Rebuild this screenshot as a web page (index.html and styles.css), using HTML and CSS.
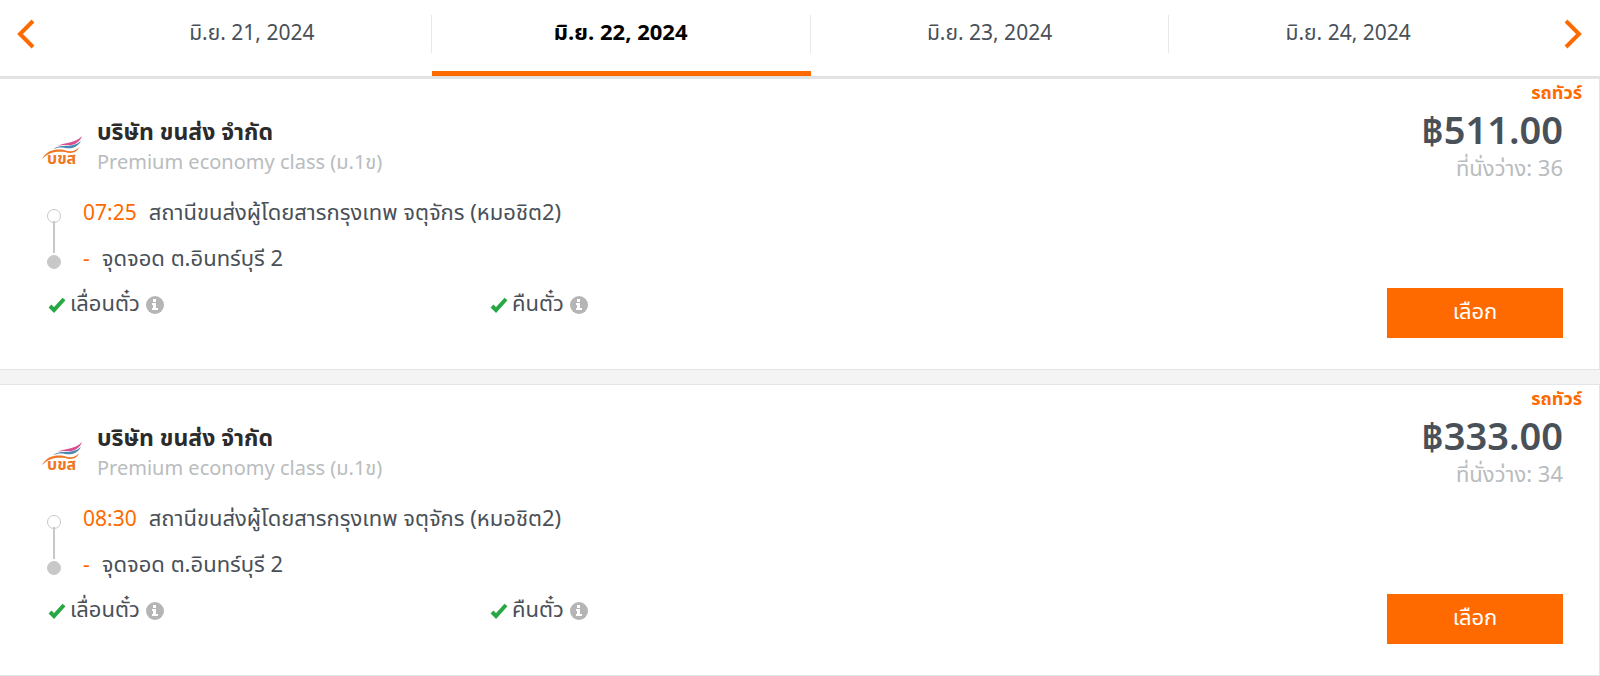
FILE: index.html
```html
<!doctype html>
<html lang="th">
<head>
    <meta charset="utf-8">
    <meta name="viewport" content="width=device-width, initial-scale=1.0">
    <title>บริษัท ขนส่ง จำกัด</title>
    <link rel="stylesheet" href="styles.css">
</head>
<body>
    <!-- shared icons -->
    <svg class="sprite" aria-hidden="true">
        <symbol id="logo" viewBox="0 0 42 30">
            <path d="M15 11C24 7 34 8 40 1C38 7 32 11 25 10C21 10 18 10 15 11Z" fill="#d94f91"/>
            <path d="M11 14C21 8 29 14 39 6C35 13 29 14 23 13C18 12 15 13 11 14Z" fill="#4c87b0"/>
            <path d="M0 24C6 14 15 14 22 15C28 17 33 17 37 12C35 18 29 19 23 17C15 16 7 17 0 24Z" fill="#ef7622"/>
        </symbol>
        <symbol id="check" viewBox="0 0 18 16">
            <path d="M2 9L6 13L16 2" fill="none" stroke="#28a745" stroke-width="4"/>
        </symbol>
        <symbol id="info" viewBox="0 0 18 18">
            <circle cx="9" cy="9" r="9" fill="#b5b5b5"/>
            <path d="M7 7H10V12H12V14H6V12H7V9H6V7ZM7 3H10V6H7Z" fill="#fff"/>
        </symbol>
    </svg>

    <nav class="dates">
        <button class="arrow" aria-label="ก่อนหน้า">
            <svg width="18" height="30" viewBox="0 0 18 30"><path d="M16 2L3 15L16 28" fill="none" stroke="#ff6a00" stroke-width="4"/></svg>
        </button>
        <a class="date" href="#"><span>มิ.ย. 21, 2024</span></a>
        <a class="date active" href="#"><span>มิ.ย. 22, 2024</span></a>
        <a class="date" href="#"><span>มิ.ย. 23, 2024</span></a>
        <a class="date" href="#"><span>มิ.ย. 24, 2024</span></a>
        <button class="arrow next" aria-label="ถัดไป">
            <svg width="18" height="30" viewBox="0 0 18 30"><path d="M2 2L15 15L2 28" fill="none" stroke="#ff6a00" stroke-width="4"/></svg>
        </button>
    </nav>

    <main>
        <article class="trip">
            <div class="detail">
                <div class="company">
                    <svg class="logo" viewBox="0 0 42 30"><use href="#logo"/><text x="5" y="29">บขส</text></svg>
                    <div>
                        <h2>บริษัท ขนส่ง จำกัด</h2>
                        <p class="muted">Premium economy class (ม.1ข)</p>
                    </div>
                </div>
                <div class="route">
                    <div class="line"></div>
                    <div class="stops">
                        <p><span class="time">07:25</span>สถานีขนส่งผู้โดยสารกรุงเทพ จตุจักร (หมอชิต2)</p>
                        <p><span class="time">-</span>จุดจอด ต.อินทร์บุรี 2</p>
                    </div>
                </div>
                <div class="options">
                    <div class="option"><svg class="check"><use href="#check"/></svg>เลื่อนตั๋ว<svg class="info"><use href="#info"/></svg></div>
                    <div class="option"><svg class="check"><use href="#check"/></svg>คืนตั๋ว<svg class="info"><use href="#info"/></svg></div>
                </div>
            </div>
            <div class="booking">
                <p class="type">รถทัวร์</p>
                <p class="price">฿511.00</p>
                <p class="muted seats">ที่นั่งว่าง: 36</p>
                <button class="select">เลือก</button>
            </div>
        </article>

        <article class="trip">
            <div class="detail">
                <div class="company">
                    <svg class="logo" viewBox="0 0 42 30"><use href="#logo"/><text x="5" y="29">บขส</text></svg>
                    <div>
                        <h2>บริษัท ขนส่ง จำกัด</h2>
                        <p class="muted">Premium economy class (ม.1ข)</p>
                    </div>
                </div>
                <div class="route">
                    <div class="line"></div>
                    <div class="stops">
                        <p><span class="time">08:30</span>สถานีขนส่งผู้โดยสารกรุงเทพ จตุจักร (หมอชิต2)</p>
                        <p><span class="time">-</span>จุดจอด ต.อินทร์บุรี 2</p>
                    </div>
                </div>
                <div class="options">
                    <div class="option"><svg class="check"><use href="#check"/></svg>เลื่อนตั๋ว<svg class="info"><use href="#info"/></svg></div>
                    <div class="option"><svg class="check"><use href="#check"/></svg>คืนตั๋ว<svg class="info"><use href="#info"/></svg></div>
                </div>
            </div>
            <div class="booking">
                <p class="type">รถทัวร์</p>
                <p class="price">฿333.00</p>
                <p class="muted seats">ที่นั่งว่าง: 34</p>
                <button class="select">เลือก</button>
            </div>
        </article>
    </main>
</body>
</html>
```

FILE: styles.css
```css
* {
    box-sizing: border-box;
}

body {
    margin: 0;
    background: #f4f4f4;
    color: #495057;
    font-family: "Noto Sans Thai", "Noto Sans", sans-serif;
    font-size: 20px;
    line-height: 30px;
}

h2, p {
    margin: 0;
}

button {
    border: 0;
    padding: 0;
    font: inherit;
    cursor: pointer;
}

.sprite {
    position: absolute;
    width: 0;
    height: 0;
}

/* date bar */
.dates {
    display: flex;
    height: 78px;
    background: #fff;
    border-bottom: 2px solid #e2e2e2;
}

.arrow {
    display: flex;
    width: 73px;
    padding: 19px 17px 0;
    background: none;
}

.arrow.next {
    justify-content: flex-end;
    padding-right: 18px;
}

.date {
    flex: 1 1 auto;
    padding-top: 15px;
    color: #495057;
    font-size: 21px;
    text-align: center;
    text-decoration: none;
}

.date span {
    display: block;
    height: 38px;
    line-height: 38px;
    border-right: 1px solid #e8e8e8;
}

.date:nth-last-child(2) span {
    border-right: 0;
}

.date.active {
    color: #000;
    font-size: 22px;
    font-weight: 700;
    border-bottom: 5px solid #ff6a00;
}

.date.active span {
    padding: 0 6px;
}

/* trip cards */
.trip {
    display: flex;
    justify-content: space-between;
    min-height: 292px;
    margin-bottom: 14px;
    background: #fff;
    border: 1px solid #e2e5e8;
    border-left: 0;
}

.trip:last-child {
    margin-bottom: 0;
}

.detail {
    flex: 1;
    padding: 39px 0 0 42px;
}

.company {
    display: flex;
    align-items: center;
    gap: 13px;
}

.logo {
    width: 42px;
    height: 30px;
    margin-top: 4px;
    overflow: visible;
}

.logo text {
    fill: #ef7622;
    font-size: 16px;
    font-weight: 700;
}

h2 {
    color: #2b2b2b;
    font-size: 23px;
    line-height: 30px;
}

.muted {
    color: #b9bcbe;
}

.route {
    display: flex;
    margin-top: 13px;
    padding-left: 6px;
}

.line {
    display: flex;
    flex-direction: column;
    align-items: center;
    width: 12px;
    margin: 18px 23px 0 0;
    background: linear-gradient(#c8c8c8, #c8c8c8) 5px 12px / 2px 32px no-repeat;
}

.line::before,
.line::after {
    content: "";
    width: 12px;
    height: 12px;
    border: 1px solid #c8c8c8;
    border-radius: 50%;
}

.line::before {
    margin-bottom: 32px;
}

.line::after {
    background: #c8c8c8;
}

.stops p {
    font-size: 22px;
    line-height: 46px;
}

.time {
    margin-right: 12px;
    color: #ff6a00;
    font-size: 21px;
}

.options {
    display: flex;
    padding-left: 6px;
}

.option {
    display: flex;
    align-items: center;
    width: 442px;
    font-size: 22px;
    line-height: 44px;
}

.check {
    width: 18px;
    height: 16px;
    margin-right: 4px;
}

.info {
    width: 18px;
    height: 18px;
    margin-left: 6px;
}

.booking {
    display: flex;
    flex-direction: column;
    width: 240px;
    padding-right: 36px;
    text-align: right;
}

.type {
    margin-right: -19px;
    color: #ff6a00;
    font-size: 18px;
    font-weight: 700;
    line-height: 30px;
}

.price {
    font-size: 38px;
    font-weight: 600;
    line-height: 48px;
}

.seats {
    font-size: 22px;
    line-height: 26px;
}

.select {
    align-self: flex-end;
    width: 176px;
    height: 50px;
    margin-top: 105px;
    background: #ff6a00;
    color: #fff;
    font-size: 22px;
}
```
